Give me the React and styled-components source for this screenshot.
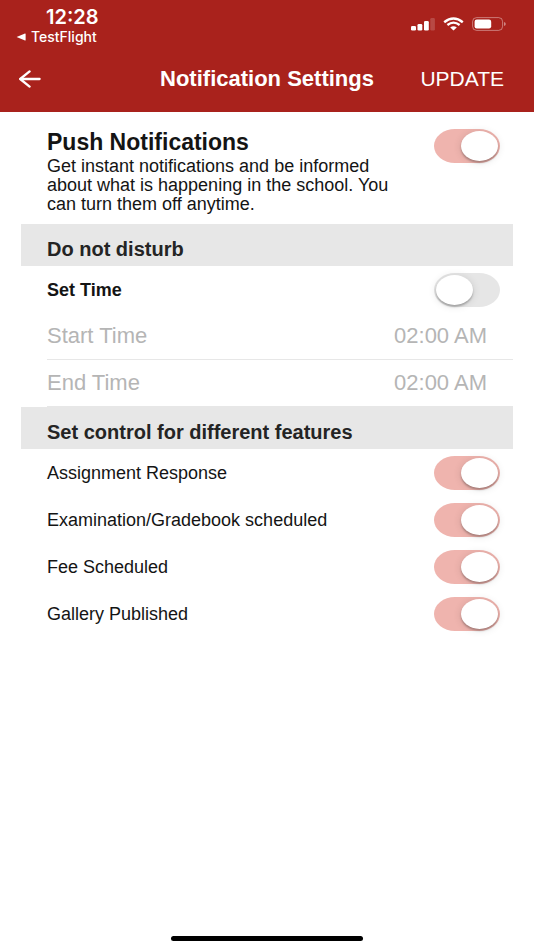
import React, { useState } from "react";
import styled, { createGlobalStyle } from "styled-components";

const GlobalStyle = createGlobalStyle`
  * {
    box-sizing: border-box;
  }
  body {
    margin: 0;
    background: #fff;
    color: #141414;
    font-family: "Liberation Sans", Arial, sans-serif;
  }
  h1, h2, p {
    margin: 0;
  }
`;

const Screen = styled.div`
  display: flex;
  flex-direction: column;
  min-height: 100vh;
`;

const Header = styled.header`
  background: #a9221c;
  color: #fff;
`;

const StatusBar = styled.div`
  display: flex;
  justify-content: space-between;
  padding: 7px 28px 0 16px;
  font-family: Inter, sans-serif;
`;

const Clock = styled.div`
  padding-left: 30px;
  font-size: 20px;
  font-weight: 600;
  line-height: 20px;
`;

const BackToApp = styled.a`
  display: flex;
  align-items: center;
  gap: 5px;
  color: inherit;
  font-size: 14px;
  font-weight: 500;
  line-height: 19px;
  text-decoration: none;
`;

const StatusIcons = styled.div`
  display: flex;
  gap: 8px;
  padding-top: 10px;
`;

const NavBar = styled.nav`
  display: grid;
  grid-template-columns: 1fr auto 1fr;
  align-items: center;
  height: 66px;
  padding: 0 18px;
`;

const NavButton = styled.button`
  display: flex;
  justify-self: ${({ $end }) => ($end ? "end" : "start")};
  padding: 0 ${({ $end }) => ($end ? "12px" : "0")} 0 0;
  border: 0;
  background: none;
  color: inherit;
  font: 21px/24px "Liberation Sans", Arial, sans-serif;
`;

const Title = styled.h1`
  font-size: 22px;
  line-height: 24px;
`;

const Content = styled.main`
  flex: 1;
  padding: 0 21px;
`;

const Intro = styled.section`
  display: flex;
  justify-content: space-between;
  gap: 24px;
  padding: 17px 13px 10px 26px;
`;

const IntroTitle = styled.h2`
  padding-bottom: 2px;
  font-size: 23px;
  line-height: 26px;
`;

const IntroText = styled.p`
  max-width: 350px;
  font-size: 18px;
  line-height: 19px;
`;

const SectionTitle = styled.h2`
  padding: 8px 26px 0;
  background: #e7e7e7;
  color: #242424;
  font-size: 20px;
  line-height: 34px;
`;

const Row = styled.div`
  display: flex;
  align-items: center;
  justify-content: space-between;
  height: 47px;
  padding: 0 13px 0 26px;
`;

const RowLabel = styled.label`
  font-size: 18px;
  font-weight: ${({ $strong }) => ($strong ? 700 : 400)};
  line-height: 20px;
`;

const TimeRow = styled.div`
  display: flex;
  align-items: center;
  justify-content: space-between;
  height: 47px;
  margin-left: 26px;
  padding-right: 26px;
  border-bottom: 1px solid #e7e7e7;
  color: #b5b5b5;
  font-size: 22px;
`;

const TimeInput = styled.input`
  width: 120px;
  padding: 0;
  border: 0;
  background: none;
  color: inherit;
  font: inherit;
  text-align: right;
`;

const Toggle = styled.input`
  flex: none;
  display: flex;
  align-items: center;
  appearance: none;
  width: 66px;
  height: 34px;
  margin: 0;
  padding: 0 2px;
  border-radius: 21px / 17px;
  background: #e6e6e6;

  &::before {
    content: "";
    width: 37px;
    height: 30px;
    border-radius: 50%;
    background: #fff;
    box-shadow: 0 2px 2px rgba(0, 0, 0, 0.24), 0 1px 8px rgba(0, 0, 0, 0.12);
  }

  &:checked {
    justify-content: flex-end;
    background: #efb4ae;
  }
`;

const HomeIndicator = styled.div`
  align-self: center;
  width: 36%;
  height: 5px;
  margin-bottom: 9px;
  border-radius: 3px;
  background: #000;
`;

const SignalIcon = () => (
  <svg width="24" height="14" viewBox="0 0 24 14" fill="#fff">
    <rect x="0" y="9" width="5" height="4.5" rx="1.3" />
    <rect x="6.5" y="7" width="4.8" height="6.5" rx="1.3" />
    <rect x="13" y="4" width="4.8" height="9.5" rx="1.3" />
    <rect x="19.3" y="1" width="4.6" height="12.5" rx="1.3" opacity="0.18" />
  </svg>
);

const WifiIcon = () => (
  <svg width="21" height="14" viewBox="0 0 21 14" fill="none">
    <path d="M1.2 5.2 Q10.5 -2.4 19.8 5.2" stroke="#fff" strokeWidth="2.4" />
    <path d="M4.4 8 Q10.5 3.2 16.6 8" stroke="#fff" strokeWidth="2.3" />
    <path d="M7.2 10.6 Q10.5 8 13.8 10.6 L10.5 13.5Z" fill="#fff" />
  </svg>
);

const BatteryIcon = () => (
  <svg width="34" height="14" viewBox="0 0 34 14">
    <rect x="0.6" y="0.6" width="30" height="12.8" rx="4" fill="none" stroke="#fff" strokeOpacity="0.4" />
    <rect x="2.6" y="2.6" width="16.6" height="8.8" rx="2.2" fill="#fff" />
    <path d="M32 5 Q33.8 5.6 33.8 7 T32 9Z" fill="#fff" fillOpacity="0.45" />
  </svg>
);

const BackTriangle = () => (
  <svg width="10" height="8" viewBox="0 0 10 8" fill="#fff">
    <path d="M0.6 4 L9 0.5 Q9.6 0.3 9.6 1 V7 Q9.6 7.7 9 7.5Z" />
  </svg>
);

const ArrowIcon = () => (
  <svg width="24" height="18" viewBox="0 0 24 18" fill="none" stroke="#fff" strokeWidth="2.3" strokeLinecap="round">
    <path d="M11.6 1.4 L2.2 9 L11.6 16.6" strokeLinejoin="round" />
    <path d="M2.6 9 H21.6" />
  </svg>
);

const features = [
  { id: "assignment", label: "Assignment Response" },
  { id: "examination", label: "Examination/Gradebook scheduled" },
  { id: "fee", label: "Fee Scheduled" },
  { id: "gallery", label: "Gallery Published" }
];

const times = [
  { id: "start", label: "Start Time" },
  { id: "end", label: "End Time" }
];

const App = () => {
  const [settings, setSettings] = useState({
    push: true,
    quiet: false,
    assignment: true,
    examination: true,
    fee: true,
    gallery: true
  });

  const toggleProps = id => ({
    id,
    type: "checkbox",
    role: "switch",
    checked: settings[id],
    onChange: () => setSettings({ ...settings, [id]: !settings[id] })
  });

  return (
    <Screen>
      <GlobalStyle />
      <Header>
        <StatusBar>
          <div>
            <Clock>12:28</Clock>
            <BackToApp href="#">
              <BackTriangle />
              TestFlight
            </BackToApp>
          </div>
          <StatusIcons>
            <SignalIcon />
            <WifiIcon />
            <BatteryIcon />
          </StatusIcons>
        </StatusBar>
        <NavBar>
          <NavButton aria-label="Back">
            <ArrowIcon />
          </NavButton>
          <Title>Notification Settings</Title>
          <NavButton $end>UPDATE</NavButton>
        </NavBar>
      </Header>

      <Content>
        <Intro>
          <div>
            <IntroTitle>
              <label htmlFor="push">Push Notifications</label>
            </IntroTitle>
            <IntroText>
              Get instant notifications and be informed about what is happening
              in the school. You can turn them off anytime.
            </IntroText>
          </div>
          <Toggle {...toggleProps("push")} />
        </Intro>

        <SectionTitle>Do not disturb</SectionTitle>
        <Row>
          <RowLabel htmlFor="quiet" $strong>
            Set Time
          </RowLabel>
          <Toggle {...toggleProps("quiet")} />
        </Row>
        {times.map(({ id, label }) => (
          <TimeRow key={id}>
            <label htmlFor={id}>{label}</label>
            <TimeInput id={id} defaultValue="02:00 AM" readOnly={!settings.quiet} />
          </TimeRow>
        ))}

        <SectionTitle>Set control for different features</SectionTitle>
        {features.map(({ id, label }) => (
          <Row key={id}>
            <RowLabel htmlFor={id}>{label}</RowLabel>
            <Toggle {...toggleProps(id)} />
          </Row>
        ))}
      </Content>
      <HomeIndicator />
    </Screen>
  );
};

export default App;
